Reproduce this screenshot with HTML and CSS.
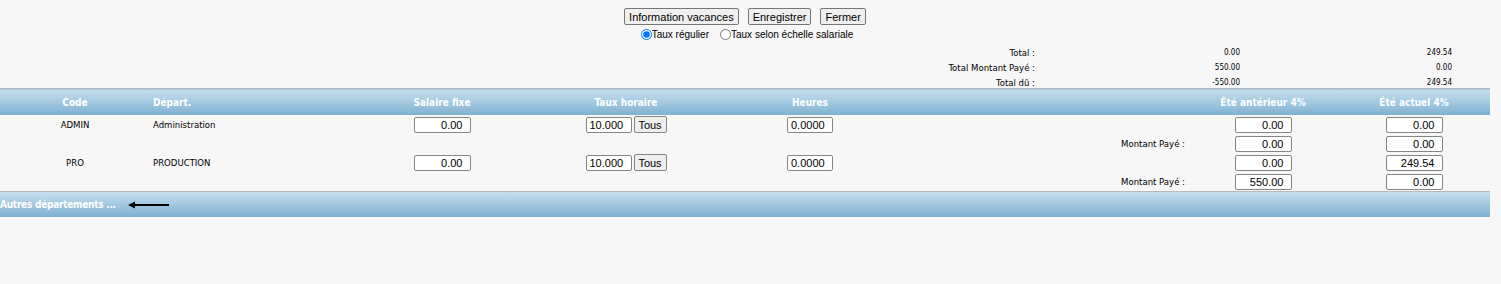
FILE: index.html
```html
<!DOCTYPE html>
<html lang="fr">
<head>
    <meta charset="UTF-8">
    <title>Vacances</title>
    <link rel="stylesheet" href="styles.css">
</head>
<body>

<div class="page">
    <div class="actions">
        <div class="buttons">
            <button class="btn">Information vacances</button>
            <button class="btn">Enregistrer</button>
            <button class="btn">Fermer</button>
        </div>
        <div class="radios">
            <label><input type="radio" name="taux" checked>Taux régulier</label>
            <label><input type="radio" name="taux">Taux selon échelle salariale</label>
        </div>
    </div>

    <div class="totals">
        <div class="t-label">Total :</div>
        <div class="t-val">0.00</div>
        <div class="t-val">249.54</div>
        <div class="t-label">Total Montant Payé :</div>
        <div class="t-val">550.00</div>
        <div class="t-val">0.00</div>
        <div class="t-label">Total dû :</div>
        <div class="t-val">-550.00</div>
        <div class="t-val">249.54</div>
    </div>

    <table class="grid">
        <colgroup>
            <col style="width:150px">
            <col style="width:220px">
            <col style="width:144px">
            <col style="width:224px">
            <col style="width:144px">
            <col style="width:306px">
            <col style="width:150px">
            <col style="width:152px">
        </colgroup>
        <thead>
            <tr>
                <th>Code</th>
                <th class="left">Départ.</th>
                <th>Salaire fixe</th>
                <th>Taux horaire</th>
                <th>Heures</th>
                <th></th>
                <th>Été antérieur 4%</th>
                <th>Été actuel 4%</th>
            </tr>
        </thead>
        <tbody>
            <tr>
                <td class="center">ADMIN</td>
                <td>Administration</td>
                <td class="center"><input class="num" value="0.00"></td>
                <td class="center"><input class="rate" value="10.000"><button class="tous">Tous</button></td>
                <td class="center"><input class="hours" value="0.0000"></td>
                <td></td>
                <td class="center"><input class="num" value="0.00"></td>
                <td class="center"><input class="num" value="0.00"></td>
            </tr>
            <tr>
                <td></td>
                <td></td>
                <td></td>
                <td></td>
                <td></td>
                <td class="paid">Montant Payé :</td>
                <td class="center"><input class="num" value="0.00"></td>
                <td class="center"><input class="num" value="0.00"></td>
            </tr>
            <tr>
                <td class="center">PRO</td>
                <td>PRODUCTION</td>
                <td class="center"><input class="num" value="0.00"></td>
                <td class="center"><input class="rate" value="10.000"><button class="tous">Tous</button></td>
                <td class="center"><input class="hours" value="0.0000"></td>
                <td></td>
                <td class="center"><input class="num" value="0.00"></td>
                <td class="center"><input class="num" value="249.54"></td>
            </tr>
            <tr>
                <td></td>
                <td></td>
                <td></td>
                <td></td>
                <td></td>
                <td class="paid">Montant Payé :</td>
                <td class="center"><input class="num" value="550.00"></td>
                <td class="center"><input class="num" value="0.00"></td>
            </tr>
        </tbody>
    </table>

    <div class="bar">
        <span class="bar-title">Autres départements ...</span>
        <svg class="arrow" width="42" height="8" viewBox="0 0 42 8">
            <path d="M4 4 H41" stroke="#000" stroke-width="2"/>
            <path d="M0 4 L7 0.5 L7 7.5 Z" fill="#000"/>
        </svg>
    </div>
</div>

</body>
</html>
```

FILE: styles.css
```css
body {
    margin: 0;
    padding: 0;
    background-color: #f7f7f7;
    font-family: "DejaVu Sans Condensed", "DejaVu Sans", sans-serif;
    font-size: 9.5px;
    color: #000;
}

.page {
    width: 1490px;
}

.actions {
    padding-top: 8px;
    text-align: center;
    font-family: "Liberation Sans", Arial, sans-serif;
}

.buttons {
    display: flex;
    justify-content: center;
    gap: 9px;
}

.btn {
    box-sizing: border-box;
    font-family: "Liberation Sans", Arial, sans-serif;
    font-size: 11px;
    height: 17px;
    padding: 0 4px;
    border: 1px solid #767676;
    border-radius: 2px;
    background: #efefef;
    color: #000;
}

.radios {
    display: flex;
    justify-content: center;
    gap: 11px;
    font-size: 10px;
    height: 14px;
    margin-top: 2px;
    padding-left: 4px;
}

.radios label {
    display: flex;
    align-items: center;
}

.radios input {
    margin: 0;
    width: 11px;
    height: 11px;
}

.totals {
    display: grid;
    grid-template-columns: 1035px 205px 212px;
    grid-template-rows: 15px 15px 13px;
    align-items: start;
    line-height: 15px;
    margin-top: 4px;
}

.t-label {
    text-align: right;
}

.t-val {
    text-align: right;
    font-size: 8px;
}

.grid {
    width: 1490px;
    table-layout: fixed;
    border-collapse: collapse;
}

.grid th {
    height: 26px;
    padding: 0;
    color: #fff;
    font-size: 10px;
    font-weight: bold;
    text-align: center;
    background: linear-gradient(to bottom, #c7dfee, #7eb0d1);
    border-top: 1px solid #b9b9b9;
}

.grid th.left {
    text-align: left;
    padding-left: 3px;
}

.grid td {
    height: 19px;
    padding: 0 3px;
    white-space: nowrap;
}

.grid td.center {
    text-align: center;
}

.grid td.paid {
    text-align: right;
}

.grid input {
    box-sizing: border-box;
    height: 16px;
    margin: 0;
    padding: 0 3px;
    font-family: "Liberation Sans", Arial, sans-serif;
    font-size: 11px;
    border: 1px solid #858585;
    border-radius: 2px;
    background: #fff;
    vertical-align: middle;
}

.grid input.num {
    width: 57px;
    text-align: right;
    padding-right: 7px;
}

.grid input.rate {
    width: 46px;
}

.grid input.hours {
    width: 46px;
}

.tous {
    box-sizing: border-box;
    height: 17px;
    width: 33px;
    margin-left: 2px;
    padding: 0;
    font-family: "Liberation Sans", Arial, sans-serif;
    font-size: 11px;
    border: 1px solid #858585;
    border-radius: 2px;
    background: #efefef;
    vertical-align: middle;
}

.bar {
    display: flex;
    align-items: center;
    gap: 12px;
    height: 25px;
    color: #fff;
    font-size: 10px;
    font-weight: bold;
    background: linear-gradient(to bottom, #c7dfee, #7eb0d1);
    border-top: 1px solid #b9b9b9;
}

.bar-title {
    letter-spacing: -0.25px;
}

.arrow {
    display: block;
}
```
